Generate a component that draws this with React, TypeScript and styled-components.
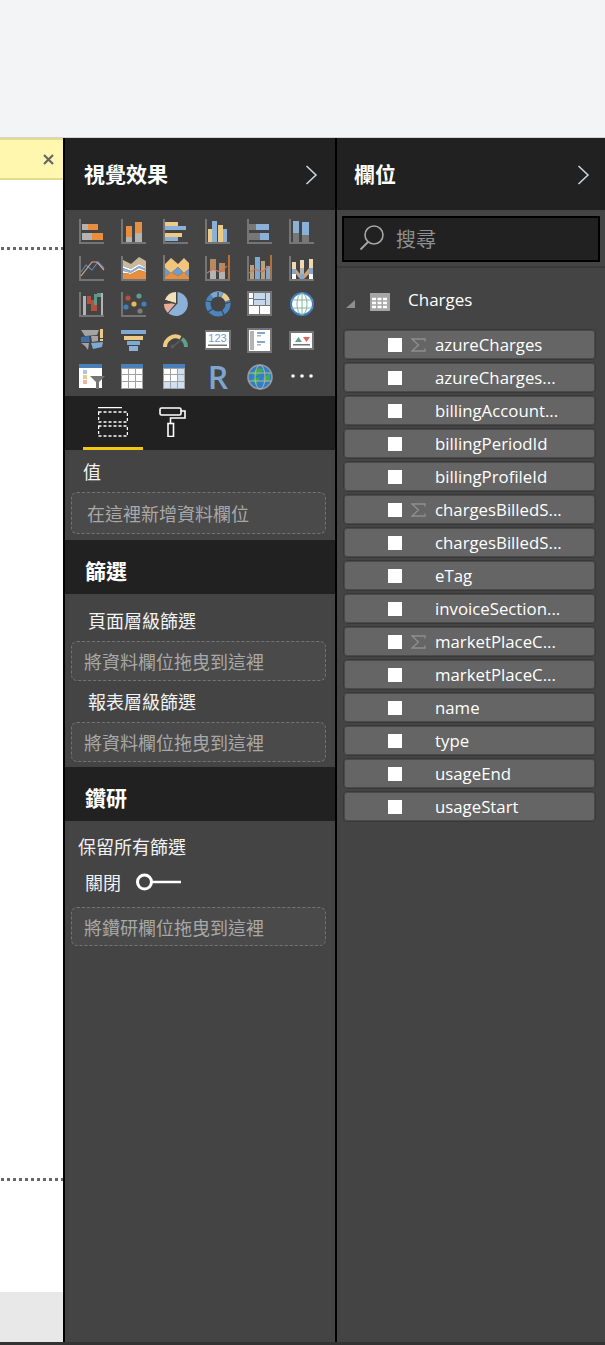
import * as React from "react";
import styled, { createGlobalStyle } from "styled-components";

const GlobalStyle = createGlobalStyle`
  html, body {
    margin: 0;
    padding: 0;
    background: #f3f4f6;
  }
  * {
    box-sizing: border-box;
  }
`;

const cjk = `"Noto Sans CJK TC", "Open Sans", sans-serif`;
const latin = `"Open Sans", "Noto Sans CJK TC", sans-serif`;

const ORANGE = "#e88f3f";
const GREY = "#b3b3b3";
const DARK = "#777777";
const YELLOW = "#eecb85";
const BLUE = "#8cb1d9";
const AXIS = "#757575";

const Page = styled.div`
  width: 605px;
  height: 1345px;
  display: flex;
  flex-direction: column;
  overflow: hidden;
  font-family: ${cjk};
`;

const TopBand = styled.div`
  height: 138px;
  flex: none;
  background: #f3f4f6;
  border-bottom: 1px solid #d4d4d4;
`;

const Main = styled.div`
  flex: 1;
  display: flex;
  min-height: 0;
`;

const BottomEdge = styled.div`
  height: 3px;
  flex: none;
  background: #333333;
`;

const Canvas = styled.div`
  width: 63px;
  flex: none;
  display: flex;
  flex-direction: column;
  background: #ffffff;
`;

const Notice = styled.div`
  height: 42px;
  flex: none;
  display: flex;
  align-items: center;
  justify-content: flex-end;
  padding-right: 9px;
  background: #fff7ae;
  border-top: 2px solid #e2dc8e;
  border-bottom: 2px solid #e2dc8e;
`;

const ReportArea = styled.div`
  flex: 1;
  display: flex;
  flex-direction: column;
  padding-top: 67px;
`;

const DottedLine = styled.div<{ $gap?: number }>`
  height: 3px;
  flex: none;
  margin-top: ${p => p.$gap ?? 0}px;
  background-image: linear-gradient(to right, #666666 3px, transparent 3px);
  background-size: 6px 3px;
  background-position: 1px 0;
`;

const Footer = styled.div`
  height: 50px;
  flex: none;
  margin-top: auto;
  background: #e8e8e8;
`;

const Pane = styled.div<{ $width: number }>`
  width: ${p => p.$width}px;
  flex: none;
  display: flex;
  flex-direction: column;
  background: #444444;
  border-left: 2px solid #000000;
`;

const PaneHeader = styled.div`
  height: 72px;
  flex: none;
  display: flex;
  align-items: center;
  justify-content: space-between;
  background: #212121;
`;

const VisualHeader = styled(PaneHeader)`
  padding: 0 17px 0 19px;
`;

const FieldHeader = styled(PaneHeader)`
  padding: 0 15px 0 17px;
`;

const PaneTitle = styled.h2`
  margin: 0 0 2px;
  color: #ffffff;
  font-size: 21px;
  line-height: 28px;
  font-weight: 700;
`;

const ChevronIcon = styled.svg`
  width: 13px;
  height: 20px;
  margin-top: 2px;
`;

const Gallery = styled.div`
  height: 186px;
  flex: none;
  display: grid;
  grid-template-columns: repeat(6, 42px);
  grid-auto-rows: 36.5px;
  padding: 8px 0 0 14px;
`;

const GalleryItem = styled.svg`
  display: block;
  width: 26px;
  height: 26px;
`;

const RGlyph = styled.span`
  display: block;
  width: 26px;
  height: 26px;
  text-align: center;
  font-family: "Open Sans", sans-serif;
  font-size: 32px;
  font-weight: 600;
  line-height: 26px;
  color: #7da5cf;
`;

const TabBar = styled.div`
  height: 54px;
  flex: none;
  display: flex;
  padding-left: 18px;
  background: #212121;
`;

const Tab = styled.div<{ $active?: boolean }>`
  width: 60px;
  height: 54px;
  display: flex;
  justify-content: center;
  padding-top: 11px;
  border-bottom: 3px solid ${p => (p.$active ? "#f2c811" : "transparent")};
`;

const WellLabel = styled.div<{ $left: number; $top?: number }>`
  padding-left: ${p => p.$left}px;
  margin-top: ${p => p.$top ?? 0}px;
  color: #f2f2f2;
  font-size: 18px;
  line-height: 26px;
`;

const Well = styled.div<{ $height: number; $pad: number; $top?: number }>`
  height: ${p => p.$height}px;
  margin: ${p => p.$top ?? 0}px 9px 0 6px;
  padding-left: ${p => p.$pad}px;
  display: flex;
  align-items: center;
  color: #a8a8a8;
  font-size: 18px;
  background: #4a4a4a;
  border: 1px dashed #737373;
  border-radius: 6px;
`;

const SectionPad = styled.div<{ $height: number }>`
  height: ${p => p.$height}px;
  flex: none;
  display: flex;
  flex-direction: column;
  padding-top: 8px;
`;

const SectionBar = styled.div`
  height: 54px;
  flex: none;
  display: flex;
  align-items: center;
  padding: 6px 0 0 20px;
  background: #212121;
  color: #ffffff;
  font-size: 21px;
  font-weight: 700;
`;

const ToggleRow = styled.div`
  display: flex;
  align-items: center;
  gap: 15px;
  height: 26px;
  margin-top: 10px;
  padding-left: 20px;
  color: #f2f2f2;
  font-size: 18px;
`;

const SearchArea = styled.div`
  height: 58px;
  flex: none;
  padding: 6px 0 0 5px;
  border-bottom: 2px solid #3a3a3a;
`;

const SearchBox = styled.div`
  width: 258px;
  height: 46px;
  display: flex;
  align-items: center;
  gap: 11px;
  padding: 0 0 2px 15px;
  background: #212121;
  border: 2px solid #000000;
  color: #8f8f8f;
  font-size: 20px;
`;

const GroupRow = styled.div`
  height: 61px;
  flex: none;
  display: flex;
  align-items: center;
  padding: 5px 0 0 9px;
  color: #ffffff;
  font-family: ${latin};
  font-size: 17px;
`;

const Expand = styled.svg`
  width: 10px;
  height: 8px;
  margin-top: 6px;
`;

const TableGlyph = styled.svg`
  width: 20px;
  height: 18px;
  margin: 0 0 -1px 14px;
`;

const GroupName = styled.span`
  margin: -4px 0 0 18px;
`;

const FieldList = styled.div`
  display: flex;
  flex-direction: column;
  gap: 2px;
  padding-left: 6px;
`;

const FieldRow = styled.div`
  width: 253px;
  height: 31px;
  display: flex;
  align-items: center;
  padding-left: 44px;
  background: #656565;
  border: 1px solid #383838;
  border-radius: 4px;
  box-shadow: 0 0 0 1px #4a4a4a inset;
`;

const Check = styled.span`
  width: 14px;
  height: 14px;
  flex: none;
  background: #ffffff;
`;

const SigmaSlot = styled.span`
  width: 33px;
  flex: none;
  display: flex;
  padding-left: 9px;
`;

const FieldName = styled.span`
  color: #ffffff;
  font-family: ${latin};
  font-size: 16.8px;
  white-space: nowrap;
`;

// 26x26 gallery icons, coordinates read off the reference
type R = [number, number, number, number, string];

const Bars = ({ items }: { items: R[] }) => (
  <>
    {items.map(([x, y, w, h, fill], i) => (
      <rect key={i} x={x} y={y} width={w} height={h} fill={fill} />
    ))}
  </>
);

const Axes = () => (
  <Bars
    items={[
      [0, 1, 2, 25, AXIS],
      [0, 24, 25, 2, AXIS]
    ]}
  />
);

const Ico = ({ children }: { children: React.ReactNode }) => (
  <GalleryItem viewBox="0 0 26 26">{children}</GalleryItem>
);

const icons: React.ReactNode[] = [
  <Ico key="stackedBar">
    <Axes />
    <Bars
      items={[
        [3, 6, 6, 6, GREY],
        [9, 6, 10, 6, ORANGE],
        [3, 15, 10, 7, GREY],
        [13, 15, 11, 7, ORANGE]
      ]}
    />
  </Ico>,
  <Ico key="stackedCol">
    <Axes />
    <Bars
      items={[
        [5, 8, 6, 11, ORANGE],
        [5, 19, 6, 5, GREY],
        [14, 4, 7, 11, ORANGE],
        [14, 15, 7, 9, GREY]
      ]}
    />
  </Ico>,
  <Ico key="clusteredBar">
    <Axes />
    <Bars
      items={[
        [2, 4, 13, 4, YELLOW],
        [2, 8, 21, 4, BLUE],
        [2, 15, 17, 4, YELLOW],
        [2, 19, 13, 4, BLUE]
      ]}
    />
  </Ico>,
  <Ico key="clusteredCol">
    <Axes />
    <Bars
      items={[
        [3, 11, 4, 13, YELLOW],
        [7, 3, 5, 21, BLUE],
        [13, 7, 5, 17, YELLOW],
        [18, 11, 4, 13, BLUE]
      ]}
    />
  </Ico>,
  <Ico key="fullBar">
    <Axes />
    <Bars
      items={[
        [2, 6, 7, 6, DARK],
        [9, 6, 13, 6, BLUE],
        [2, 15, 11, 7, DARK],
        [13, 15, 9, 7, BLUE]
      ]}
    />
  </Ico>,
  <Ico key="fullCol">
    <Axes />
    <Bars
      items={[
        [4, 3, 6, 12, BLUE],
        [4, 15, 6, 9, DARK],
        [13, 4, 7, 13, BLUE],
        [13, 17, 7, 7, DARK]
      ]}
    />
  </Ico>,
  <Ico key="line">
    <Axes />
    <polyline points="2,17 7,10 13,15 19,7 25,13" fill="none" stroke="#5b86b5" strokeWidth="1.2" />
    <polyline points="2,21 13,7 18,7 25,15" fill="none" stroke="#d9a596" strokeWidth="1.2" />
  </Ico>,
  <Ico key="area">
    <rect x="0" y="1" width="2" height="25" fill={AXIS} />
    <rect x="0" y="24" width="25" height="2" fill={AXIS} />
    <polygon points="2,5 10,9 18,2 25,6 25,13 18,9 10,14 2,11" fill="#c9b99a" />
    <polygon points="2,11 10,14 18,9 25,13 25,14 18,11 10,16 2,13" fill="#ffffff" />
    <polygon points="2,13 10,16 18,11 25,14 25,16 18,13 10,18 2,16" fill={BLUE} />
    <polygon points="2,16 10,18 18,13 25,16 25,17 18,15 10,19 2,18" fill="#ffffff" />
    <polygon points="2,18 10,19 18,15 25,17 25,24 2,24" fill={ORANGE} />
  </Ico>,
  <Ico key="stackedArea">
    <rect x="0" y="0" width="2" height="26" fill={AXIS} />
    <rect x="0" y="24" width="26" height="2" fill={AXIS} />
    <polygon points="2,9 8,3 15,9 21,3 26,8 26,14 21,18 15,12 8,18 2,13" fill="#f2c57c" />
    <polygon points="2,13 8,18 15,12 21,18 26,14 26,22 21,17 15,21 8,17 2,22" fill="#6f9cc9" />
    <polygon points="2,22 8,17 15,21 21,17 26,22 26,24 2,24" fill={ORANGE} />
  </Ico>,
  <Ico key="combo1">
    <Axes />
    <Bars
      items={[
        [5, 4, 6, 11, "#b58a63"],
        [5, 15, 6, 9, GREY],
        [14, 8, 6, 9, "#b58a63"],
        [14, 17, 6, 7, GREY],
        [23, 0, 2, 24, "#b0713c"]
      ]}
    />
    <polyline points="2,18 8,14 15,17 22,11" fill="none" stroke="#d1745a" strokeWidth="1.1" />
  </Ico>,
  <Ico key="combo2">
    <Axes />
    <Bars
      items={[
        [3, 10, 4, 14, "#b9a27e"],
        [8, 2, 5, 22, "#7fa8d2"],
        [14, 6, 4, 18, "#b9a27e"],
        [19, 11, 4, 13, "#7fa8d2"],
        [23, 0, 2, 24, "#b0713c"]
      ]}
    />
    <polyline points="2,18 8,14 15,17 22,11" fill="none" stroke="#d1745a" strokeWidth="1.1" />
  </Ico>,
  <Ico key="ribbon">
    <Axes />
    <Bars
      items={[
        [3, 7, 4, 7, "#f0d9b0"],
        [3, 14, 4, 5, "#7fa8d2"],
        [3, 19, 4, 5, "#ffffff"],
        [11, 5, 4, 8, "#f0d9b0"],
        [11, 13, 4, 6, GREY],
        [11, 19, 4, 5, "#7fa8d2"],
        [20, 4, 4, 9, "#f0d9b0"],
        [20, 13, 4, 6, "#7fa8d2"],
        [20, 19, 4, 5, "#ffffff"]
      ]}
    />
    <polygon points="7,14 11,19 11,24 7,19" fill="#c9a27e" />
    <polygon points="15,19 20,13 20,19 15,24" fill="#c9a27e" />
  </Ico>,
  <Ico key="waterfall">
    <Axes />
    <Bars
      items={[
        [4, 5, 3, 19, GREY],
        [8, 5, 4, 8, "#b4503a"],
        [12, 9, 3, 11, "#b4503a"],
        [15, 14, 3, 6, "#b4503a"],
        [15, 3, 3, 11, "#5b9a8b"],
        [18, 2, 4, 4, "#5b9a8b"],
        [22, 2, 2, 22, GREY]
      ]}
    />
  </Ico>,
  <Ico key="scatter">
    <Axes />
    <circle cx="7" cy="7" r="2.6" fill="#b4503a" />
    <circle cx="18" cy="5" r="2.6" fill="#5f9e8b" />
    <circle cx="5" cy="16" r="2.6" fill="#3f7fc0" />
    <circle cx="13" cy="13" r="2.6" fill="#e3b85e" />
    <circle cx="23" cy="13" r="2.6" fill="#3f7fc0" />
    <circle cx="19" cy="20" r="2.6" fill="#7d7d7d" />
  </Ico>,
  <Ico key="pie">
    <path d="M14 13 L14 1 A12 12 0 1 1 5 22 Z" fill="#8cb1d9" />
    <path d="M13 12 L1 13 A12 12 0 0 0 5 22 Z" fill="#e5ab9b" />
    <path d="M13 12 L2 9 A12 12 0 0 1 13 1 Z" fill="#f3e0bb" />
    <path d="M14 13 L14 1 M13 13 L1 9 M13 13 L5 22" stroke="#444444" strokeWidth="1" />
  </Ico>,
  <Ico key="donut">
    <circle cx="13" cy="13" r="10" fill="none" stroke="#4a85bd" strokeWidth="5" />
    <path d="M7 5 A10 10 0 0 1 17 3.8" fill="none" stroke="#7ea6cd" strokeWidth="5" />
    <path d="M17.5 4 A10 10 0 0 1 22.5 9.5" fill="none" stroke="#eecb85" strokeWidth="5" />
    <path d="M13 1 V7 M25 11 L19 13 M19 24 L16 18 M3 21 L9 17 M1 10 L7 11" stroke="#444444" strokeWidth="1.2" />
  </Ico>,
  <Ico key="treemap">
    <rect x="0" y="0" width="25" height="25" fill={AXIS} />
    <Bars
      items={[
        [2, 2, 4, 5, "#ffffff"],
        [2, 8, 4, 6, "#ffffff"],
        [7, 2, 11, 6, "#c5d8ec"],
        [7, 9, 11, 5, "#c5d8ec"],
        [19, 2, 4, 12, "#c5d8ec"],
        [2, 15, 10, 8, "#ffffff"],
        [13, 15, 10, 8, "#ffffff"]
      ]}
    />
  </Ico>,
  <Ico key="globe">
    <circle cx="13" cy="13" r="11" fill="#ffffff" stroke="#3f7fc0" strokeWidth="2" />
    <ellipse cx="13" cy="13" rx="5" ry="11" fill="none" stroke="#7fb5a3" strokeWidth="1" />
    <path d="M2 9 H24 M2 17 H24 M13 2 V24" stroke="#7fb5a3" strokeWidth="1" />
  </Ico>,
  <Ico key="shapeMap">
    <polygon points="2,2 20,2 18,7 6,8" fill="#a3a3a3" />
    <polygon points="2,9 10,8 11,14 2,14" fill="#3f6ea5" />
    <polygon points="12,8 19,8 19,13 13,14" fill="#a3a3a3" />
    <polygon points="2,15 10,15 9,22 6,18" fill="#a3a3a3" />
    <polygon points="12,15 24,14 23,19 14,21" fill="#7fa8d2" />
    <rect x="21" y="1" width="3" height="9" fill="#eecb85" />
    <rect x="21" y="11" width="3" height="2" fill="#eecb85" />
  </Ico>,
  <Ico key="funnel">
    <Bars
      items={[
        [0, 2, 25, 4, "#7fa8d2"],
        [3, 8, 19, 4, "#eecb85"],
        [6, 13, 13, 4, "#7fa8d2"],
        [8, 18, 9, 5, "#8cb1d9"]
      ]}
    />
  </Ico>,
  <Ico key="gauge">
    <path d="M2 19 A10.5 10.5 0 0 1 17.5 9.7" fill="none" stroke="#eecb85" strokeWidth="4" />
    <path d="M19 10.7 A10.5 10.5 0 0 1 23 19" fill="none" stroke="#5fa08c" strokeWidth="4" />
    <path d="M9 19 L17 13" stroke="#5a5a5a" strokeWidth="1.6" />
    <circle cx="9.5" cy="18.5" r="2" fill="#5a5a5a" />
  </Ico>,
  <Ico key="card">
    <rect x="0" y="3" width="25" height="18" fill="#ffffff" stroke={AXIS} strokeWidth="2" />
    <text x="12.5" y="14" textAnchor="middle" fontSize="11" fontFamily="Liberation Sans" fill="#6f9cc9">
      123
    </text>
    <rect x="3" y="16.5" width="19" height="1.5" fill={AXIS} />
  </Ico>,
  <Ico key="multiCard">
    <rect x="1" y="1" width="23" height="23" fill="#ffffff" stroke={AXIS} strokeWidth="2" />
    <rect x="3" y="3" width="4" height="19" fill="#b3b3b3" />
    <Bars
      items={[
        [10, 4, 8, 2, "#7fa8d2"],
        [10, 7, 4, 1.5, "#b3b3b3"],
        [10, 13, 8, 2, "#7fa8d2"],
        [10, 16, 4, 1.5, "#b3b3b3"]
      ]}
    />
  </Ico>,
  <Ico key="kpi">
    <rect x="1" y="4" width="23" height="17" fill="#ffffff" stroke={AXIS} strokeWidth="2" />
    <polygon points="6,14 9.5,9 13,14" fill="#5fa08c" />
    <polygon points="14,9 21,9 17.5,14" fill="#e0675a" />
    <rect x="4" y="16" width="17" height="1.5" fill={AXIS} />
  </Ico>,
  <Ico key="slicer">
    <rect x="0" y="0" width="23" height="24" fill="#ffffff" />
    <rect x="0" y="0" width="23" height="4" fill="#4a7fb5" />
    <Bars
      items={[
        [4, 6, 4, 4, "#a8c8e8"],
        [4, 11, 4, 4, "#eecb85"],
        [4, 16, 4, 4, "#e9b5a5"]
      ]}
    />
    <polygon points="11,12 26,12 20,18 20,25 17,25 17,18" fill="#757575" />
  </Ico>,
  <Ico key="table">
    <rect x="0" y="0" width="22" height="25" fill="#a3a3a3" />
    <rect x="0" y="0" width="22" height="4" fill="#4a7fb5" />
    <Bars
      items={[
        [1, 5, 6, 5, "#ffffff"],
        [8, 5, 6, 5, "#ffffff"],
        [15, 5, 6, 5, "#ffffff"],
        [1, 11, 6, 6, "#ffffff"],
        [8, 11, 6, 6, "#ffffff"],
        [15, 11, 6, 6, "#ffffff"],
        [1, 18, 6, 6, "#ffffff"],
        [8, 18, 6, 6, "#ffffff"],
        [15, 18, 6, 6, "#ffffff"]
      ]}
    />
  </Ico>,
  <Ico key="matrix">
    <rect x="0" y="0" width="22" height="25" fill="#a3a3a3" />
    <rect x="0" y="0" width="22" height="4" fill="#4a7fb5" />
    <Bars
      items={[
        [1, 5, 6, 5, "#ffffff"],
        [8, 5, 6, 5, "#ffffff"],
        [15, 5, 6, 5, "#cfe0f0"],
        [1, 11, 6, 6, "#ffffff"],
        [8, 11, 6, 6, "#ffffff"],
        [15, 11, 6, 6, "#cfe0f0"],
        [1, 18, 6, 6, "#cfe0f0"],
        [8, 18, 6, 6, "#cfe0f0"],
        [15, 18, 6, 6, "#cfe0f0"]
      ]}
    />
  </Ico>,
  <RGlyph key="r">R</RGlyph>,
  <Ico key="arcgis">
    <circle cx="13" cy="13" r="12" fill="#2f7fc9" stroke="#9a9a9a" strokeWidth="1.6" />
    <polygon points="4,10 12,4 17,6 10,12" fill="#3fae49" />
    <polygon points="5,15 13,13 9,21" fill="#3fae49" />
    <polygon points="16,14 23,9 23,16 17,19" fill="#3fae49" />
    <ellipse cx="13" cy="13" rx="5" ry="12" fill="none" stroke="#b3b3b3" strokeWidth="1" />
    <path d="M2 9 H24 M2 17 H24" stroke="#b3b3b3" strokeWidth="1" />
  </Ico>,
  <Ico key="more">
    <circle cx="4" cy="12" r="1.8" fill="#ffffff" />
    <circle cx="13" cy="12" r="1.8" fill="#ffffff" />
    <circle cx="22" cy="12" r="1.8" fill="#ffffff" />
  </Ico>
];

const Chevron = () => (
  <ChevronIcon viewBox="0 0 13 20">
    <path d="M1.5 1 L11 10 L1.5 19" fill="none" stroke="#cfd8e0" strokeWidth="1.5" />
  </ChevronIcon>
);

const fields: Array<[string, boolean]> = [
  ["azureCharges", true],
  ["azureCharges...", false],
  ["billingAccount...", false],
  ["billingPeriodId", false],
  ["billingProfileId", false],
  ["chargesBilledS...", true],
  ["chargesBilledS...", false],
  ["eTag", false],
  ["invoiceSection...", false],
  ["marketPlaceC...", true],
  ["marketPlaceC...", false],
  ["name", false],
  ["type", false],
  ["usageEnd", false],
  ["usageStart", false]
];

export default function App(): React.ReactElement {
  return (
    <Page>
      <GlobalStyle />
      <TopBand />
      <Main>
        <Canvas>
          <Notice>
            <svg width="11" height="11" viewBox="0 0 11 11">
              <path d="M1 1 L10 10 M10 1 L1 10" stroke="#666666" strokeWidth="2.2" />
            </svg>
          </Notice>
          <ReportArea>
            <DottedLine />
            <DottedLine $gap={928} />
            <Footer />
          </ReportArea>
        </Canvas>

        <Pane $width={272}>
          <VisualHeader>
            <PaneTitle>視覺效果</PaneTitle>
            <Chevron />
          </VisualHeader>
          <Gallery>{icons}</Gallery>
          <TabBar>
            <Tab $active>
              <svg width="30" height="30" viewBox="0 0 30 30">
                <path d="M0 0.5 H24" stroke="#ffffff" strokeWidth="1.5" />
                <rect x="0.5" y="5" width="29" height="10" fill="none" stroke="#ffffff" strokeWidth="1.5" strokeDasharray="3 2" />
                <rect x="0.5" y="19" width="29" height="10" fill="none" stroke="#ffffff" strokeWidth="1.5" strokeDasharray="3 2" />
              </svg>
            </Tab>
            <Tab>
              <svg width="30" height="30" viewBox="0 0 30 30">
                <rect x="2" y="1" width="21" height="7" rx="1.5" fill="none" stroke="#ffffff" strokeWidth="1.6" />
                <path d="M23 4 H27 V11 H12.5 V16" fill="none" stroke="#ffffff" strokeWidth="1.6" />
                <rect x="10" y="16.5" width="5.5" height="13" fill="none" stroke="#ffffff" strokeWidth="1.6" />
              </svg>
            </Tab>
          </TabBar>
          <SectionPad $height={90}>
            <WellLabel $left={18}>值</WellLabel>
            <Well $height={42} $pad={15} $top={8}>
              在這裡新增資料欄位
            </Well>
          </SectionPad>
          <SectionBar>篩選</SectionBar>
          <SectionPad $height={173}>
            <WellLabel $left={23} $top={5}>
              頁面層級篩選
            </WellLabel>
            <Well $height={40} $pad={12} $top={8}>
              將資料欄位拖曳到這裡
            </Well>
            <WellLabel $left={23} $top={7}>
              報表層級篩選
            </WellLabel>
            <Well $height={40} $pad={12} $top={8}>
              將資料欄位拖曳到這裡
            </Well>
          </SectionPad>
          <SectionBar>鑽研</SectionBar>
          <SectionPad $height={130}>
            <WellLabel $left={13} $top={4}>
              保留所有篩選
            </WellLabel>
            <ToggleRow>
              <span>關閉</span>
              <svg width="45" height="18" viewBox="0 0 45 18">
                <circle cx="8.5" cy="9" r="7" fill="none" stroke="#ffffff" strokeWidth="3" />
                <path d="M16 9 H45" stroke="#ffffff" strokeWidth="2.5" />
              </svg>
            </ToggleRow>
            <Well $height={39} $pad={12} $top={12}>
              將鑽研欄位拖曳到這裡
            </Well>
          </SectionPad>
        </Pane>

        <Pane $width={270}>
          <FieldHeader>
            <PaneTitle>欄位</PaneTitle>
            <Chevron />
          </FieldHeader>
          <SearchArea>
            <SearchBox>
              <svg width="26" height="26" viewBox="0 0 26 26">
                <circle cx="15" cy="10" r="9" fill="none" stroke="#a6a6a6" strokeWidth="1.6" />
                <path d="M9 17 L1.5 24.5" stroke="#a6a6a6" strokeWidth="1.8" />
              </svg>
              <span>搜尋</span>
            </SearchBox>
          </SearchArea>
          <GroupRow>
            <Expand viewBox="0 0 10 8">
              <polygon points="9,0 9,8 0,8" fill="#8f8f8f" />
            </Expand>
            <TableGlyph viewBox="0 0 20 18">
              <rect width="20" height="18" fill="#a6a6a6" />
              <path d="M2 6 H18 M2 10 H18 M2 14 H18" stroke="#ffffff" strokeWidth="2.4" strokeDasharray="4 1.5" />
            </TableGlyph>
            <GroupName>Charges</GroupName>
          </GroupRow>
          <FieldList>
            {fields.map(([name, measure], i) => (
              <FieldRow key={i}>
                <Check />
                <SigmaSlot>
                  {measure && (
                    <svg width="15" height="14" viewBox="0 0 15 14">
                      <path d="M14 3.5 V1 H1 L7.5 7 L1 13 H14 V10.5" fill="none" stroke="#8f8f8f" strokeWidth="1.3" />
                    </svg>
                  )}
                </SigmaSlot>
                <FieldName>{name}</FieldName>
              </FieldRow>
            ))}
          </FieldList>
        </Pane>
      </Main>
      <BottomEdge />
    </Page>
  );
}
